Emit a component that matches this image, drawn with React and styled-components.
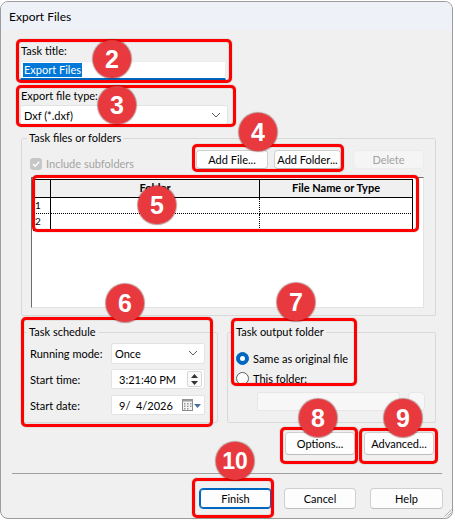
import React from 'react';
import styled, { createGlobalStyle } from 'styled-components';

const GlobalStyle = createGlobalStyle`
  html, body {
    margin: 0;
    padding: 0;
    background: #fff;
  }
  body {
    font-family: Lato, "Liberation Sans", sans-serif;
    font-size: 11px;
    color: #000;
  }
  * { box-sizing: border-box; }
`;

const Screen = styled.div`
  position: relative;
  width: 455px;
  height: 521px;
  padding-top: 1px;
  overflow: hidden;
`;

const Window = styled.div`
  width: 453px;
  height: 518px;
  border: 1px solid #9c9c9c;
  border-radius: 8px;
  background: #f0f0f0;
  display: flex;
  flex-direction: column;
  overflow: hidden;
`;

const TitleBar = styled.div`
  height: 28px;
  flex: none;
  background: #eef2f8;
  padding-left: 8px;
  display: flex;
  align-items: center;
  font-size: 12px;
`;

const Body = styled.div`
  flex: 1;
  display: flex;
  flex-direction: column;
  padding-left: 19px;
`;

const Label = styled.div`
  line-height: 15px;
  height: 15px;
  margin-top: ${p => p.$top || 0}px;
  padding-left: 1px;
  white-space: nowrap;
`;

const TextBox = styled.div`
  width: ${p => p.$w}px;
  height: 19px;
  margin-top: 3px;
  background: #fff;
  border: 1px solid #ececec;
  border-bottom: 2px solid #0067c0;
  padding-left: 2px;
  display: flex;
  align-items: center;
`;

const Selected = styled.span`
  background: #0078d7;
  color: #fff;
  line-height: 14px;
  padding: 0 1px;
`;

const Combo = styled.div`
  width: ${p => p.$w}px;
  height: ${p => p.$h || 20}px;
  margin-top: ${p => p.$top || 0}px;
  background: #fff;
  border: 1px solid #e3e3e3;
  border-radius: 2px;
  display: flex;
  align-items: center;
  justify-content: space-between;
  padding: 0 6px 0 ${p => p.$pl || 3}px;
  white-space: nowrap;
`;

const Group = styled.fieldset`
  margin: ${p => p.$top || 0}px 0 0 1px;
  padding: 0;
  width: ${p => p.$w}px;
  border: 1px solid #d9d9d9;
  border-radius: 2px;
  min-width: 0;
`;

const Legend = styled.legend`
  margin-left: ${p => p.$ml || 5}px;
  padding: 0 2px;
  line-height: 14px;
  font-size: 11px;
`;

const FilesInner = styled.div`
  padding: 5px 11px 7px 8px;
  display: flex;
  flex-direction: column;
`;

const ToolRow = styled.div`
  display: flex;
  align-items: flex-start;
  height: 19px;
`;

const CheckLabel = styled.label`
  display: flex;
  align-items: center;
  gap: 4px;
  margin-top: 7px;
  color: #a3a3a3;
  line-height: 14px;
  white-space: nowrap;
`;

const CheckBox = styled.span`
  width: 12px;
  height: 12px;
  border-radius: 3px;
  background: #c6c6c6;
  display: flex;
  align-items: center;
  justify-content: center;
`;

const ButtonGroup = styled.div`
  margin-left: auto;
  display: flex;
  gap: ${p => p.$gap || 6}px;
`;

const Button = styled.button`
  width: ${p => p.$w}px;
  height: ${p => p.$h || 19}px;
  margin-left: ${p => p.$ml || 0}px;
  padding: 0;
  white-space: nowrap;
  font-family: inherit;
  font-size: 11px;
  color: ${p => (p.disabled ? '#a3a3a3' : '#000')};
  background: ${p => (p.disabled ? '#f5f5f5' : '#fdfdfd')};
  border: 1px solid ${p => (p.$default ? '#0067c0' : p.disabled ? '#ececec' : '#d0d0d0')};
  border-bottom-color: ${p => (p.$default ? '#0067c0' : p.disabled ? '#ececec' : '#bdbdbd')};
  border-radius: 4px;
  box-shadow: ${p => (p.$default ? 'inset 0 0 0 1px #0067c0' : 'none')};
`;

const List = styled.div`
  margin: 8px 0 0 1px;
  width: 393px;
  height: 131px;
  background: #fff;
  border-style: solid;
  border-width: 1px;
  border-color: #6d6d6d #e3e3e3 #e3e3e3 #6d6d6d;
  padding: 1px;
`;

const Grid = styled.div`
  display: grid;
  grid-template-columns: 17px 209px 153px;
  grid-template-rows: 18px 16px 16px;
  width: 380px;
  border: 1px solid #000;
`;

const HeadCell = styled.div`
  background: #f0f0f0;
  border-right: 1px solid #000;
  border-bottom: 1px solid #000;
  font-weight: 700;
  text-align: center;
  line-height: 16px;
  &:last-child { border-right: 0; }
`;

const RowNum = styled.div`
  border-right: 1px solid #000;
  border-bottom: ${p => (p.$last ? 'none' : '1px dotted #000')};
  font-size: 10px;
  line-height: 15px;
  padding-left: 1px;
`;

const Cell = styled.div`
  border-right: ${p => (p.$end ? 'none' : '1px dotted #000')};
  border-bottom: ${p => (p.$last ? 'none' : '1px dotted #000')};
`;

const LowerRow = styled.div`
  display: flex;
  gap: 8px;
  margin-top: 9px;
`;

const ScheduleInner = styled.div`
  padding: 4px 12px 7px 8px;
  display: flex;
  flex-direction: column;
  gap: 6px;
`;

const FormRow = styled.div`
  display: flex;
  align-items: center;
  height: 20px;
`;

const RowLabel = styled.div`
  width: 81px;
  white-space: nowrap;
`;

const Picker = styled.div`
  width: 94px;
  height: 20px;
  background: #fff;
  border: 1px solid #e3e3e3;
  border-radius: 2px;
  display: flex;
  align-items: center;
  justify-content: space-between;
  padding: 0 2px 0 7px;
  white-space: nowrap;
`;

const Spin = styled.div`
  width: 15px;
  height: 16px;
  border: 1px solid #d6d6d6;
  border-radius: 2px;
  background: #fafafa;
  display: flex;
  flex-direction: column;
  align-items: center;
  justify-content: space-around;
`;

const OutputInner = styled.div`
  padding: 11px 10px 11px 8px;
  display: flex;
  flex-direction: column;
  gap: 4px;
`;

const RadioRow = styled.label`
  display: flex;
  align-items: center;
  gap: 4px;
  height: 16px;
  white-space: nowrap;
`;

const Radio = styled.span`
  width: 13px;
  height: 13px;
  border-radius: 50%;
  background: ${p => (p.$on ? '#0067c0' : '#fff')};
  border: 1px solid ${p => (p.$on ? '#0067c0' : '#5c5c5c')};
  display: flex;
  align-items: center;
  justify-content: center;
  &::after {
    content: '';
    width: 5px;
    height: 5px;
    border-radius: 50%;
    background: #fff;
    display: ${p => (p.$on ? 'block' : 'none')};
  }
`;

const FolderRow = styled.div`
  display: flex;
  gap: 8px;
  margin: 2px 0 0 21px;
`;

const DimBox = styled.div`
  width: ${p => p.$w}px;
  height: 19px;
  background: #f7f7f7;
  border: 1px solid #e6e6e6;
  border-radius: ${p => p.$r || 2}px;
`;

const ActionRow = styled.div`
  display: flex;
  justify-content: flex-end;
  gap: 9px;
  margin-top: 9px;
  padding-right: 18px;
`;

const Separator = styled.div`
  height: 1px;
  background: #a0a0a0;
  margin: 18px 10px 0 -8px;
`;

const Footer = styled.div`
  display: flex;
  margin-top: 14px;
  padding-left: 179px;
  flex: 1;
`;

const Grip = styled.svg`
  margin-left: auto;
  align-self: flex-end;
  margin-bottom: 1px;
`;

/* annotation marks drawn over the dialog */
const Frame = styled.div`
  position: absolute;
  left: ${p => p.$x}px;
  top: ${p => p.$y}px;
  width: ${p => p.$w}px;
  height: ${p => p.$h}px;
  border: 3px solid #ff0000;
  border-radius: 5px;
  box-shadow: 0 0 1px rgba(90, 0, 0, 0.7), inset 0 0 1px rgba(90, 0, 0, 0.6);
  pointer-events: none;
`;

const Badge = styled.div`
  position: absolute;
  left: ${p => p.$cx - 19}px;
  top: ${p => p.$cy - 19}px;
  width: 38px;
  height: 38px;
  border-radius: 50%;
  background: #e8393e;
  box-shadow: 0 0 1px 1px rgba(120, 10, 10, 0.45);
  color: #fff;
  font-family: "Liberation Sans", Arial, sans-serif;
  font-weight: 700;
  font-size: ${p => (p.$small ? 23 : 25)}px;
  display: flex;
  align-items: center;
  justify-content: center;
  padding-top: 1px;
`;

const Chevron = () => (
  <svg width="10" height="6" viewBox="0 0 10 6">
    <polyline points="1,1 5,5 9,1" fill="none" stroke="#5a5a5a" strokeWidth="1" />
  </svg>
);

const Tick = () => (
  <svg width="10" height="10" viewBox="0 0 10 10">
    <polyline points="2,5 4.2,7.2 8.2,2.8" fill="none" stroke="#fff" strokeWidth="1.4" />
  </svg>
);

const SpinArrows = () => (
  <Spin>
    <svg width="7" height="4" viewBox="0 0 7 4"><polygon points="0,4 3.5,0 7,4" fill="#333" /></svg>
    <svg width="7" height="4" viewBox="0 0 7 4"><polygon points="0,0 3.5,4 7,0" fill="#333" /></svg>
  </Spin>
);

const CalendarDrop = () => (
  <svg width="20" height="13" viewBox="0 0 20 13">
    <rect x="0.5" y="0.5" width="10" height="11" fill="#f4f4f4" stroke="#8a8a8a" />
    <rect x="0.5" y="0.5" width="10" height="2" fill="#9a9a9a" />
    <g fill="#9a9a9a">
      <rect x="2" y="4" width="1.5" height="1.5" /><rect x="5" y="4" width="1.5" height="1.5" /><rect x="8" y="4" width="1.5" height="1.5" />
      <rect x="2" y="6.5" width="1.5" height="1.5" /><rect x="5" y="6.5" width="1.5" height="1.5" /><rect x="8" y="6.5" width="1.5" height="1.5" />
      <rect x="2" y="9" width="1.5" height="1.5" /><rect x="5" y="9" width="1.5" height="1.5" />
    </g>
    <polygon points="12,5 19,5 15.5,9" fill="#4a6fa5" />
  </svg>
);

const marks = [
  { n: 2, box: [16, 39, 216, 44], c: [112, 59] },
  { n: 3, box: [16, 85, 220, 42], c: [117, 105] },
  { n: 4, box: [192, 144, 152, 28], c: [258, 132] },
  { n: 5, box: [32, 175, 387, 57], c: [157, 205] },
  { n: 6, box: [21, 317, 192, 110], c: [125, 303] },
  { n: 7, box: [231, 318, 126, 68], c: [296, 302] },
  { n: 8, box: [280, 427, 78, 37], c: [318, 418] },
  { n: 9, box: [359, 428, 79, 36], c: [403, 418] },
  { n: 10, box: [192, 478, 82, 40], c: [235, 461] },
];

export default function App() {
  return (
    <Screen>
      <GlobalStyle />
      <Window>
        <TitleBar>Export Files</TitleBar>
        <Body>
          <Label $top={13}>Task title:</Label>
          <TextBox $w={206}>
            <Selected>Export Files</Selected>
          </TextBox>

          <Label $top={8}>Export file type:</Label>
          <Combo $w={208} $top={2}>
            <span>Dxf (*.dxf)</span>
            <Chevron />
          </Combo>

          <Group $top={6} $w={415}>
            <Legend>Task files or folders</Legend>
            <FilesInner>
              <ToolRow>
                <CheckLabel>
                  <CheckBox><Tick /></CheckBox>
                  Include subfolders
                </CheckLabel>
                <ButtonGroup>
                  <Button $w={72}>Add File...</Button>
                  <Button $w={67}>Add Folder...</Button>
                  <Button $w={71} $ml={6} disabled>Delete</Button>
                </ButtonGroup>
              </ToolRow>
              <List>
                <Grid>
                  <HeadCell />
                  <HeadCell>Folder</HeadCell>
                  <HeadCell>File Name or Type</HeadCell>
                  <RowNum>1</RowNum>
                  <Cell />
                  <Cell $end />
                  <RowNum $last>2</RowNum>
                  <Cell $last />
                  <Cell $last $end />
                </Grid>
              </List>
            </FilesInner>
          </Group>

          <LowerRow>
            <Group $w={197}>
              <Legend>Task schedule</Legend>
              <ScheduleInner>
                <FormRow>
                  <RowLabel>Running mode:</RowLabel>
                  <Combo $w={94} $h={21}>
                    <span>Once</span>
                    <Chevron />
                  </Combo>
                </FormRow>
                <FormRow>
                  <RowLabel>Start time:</RowLabel>
                  <Picker>
                    <span>3:21:40 PM</span>
                    <SpinArrows />
                  </Picker>
                </FormRow>
                <FormRow>
                  <RowLabel>Start date:</RowLabel>
                  <Picker>
                    <span>9/&nbsp;&nbsp;4/2026</span>
                    <CalendarDrop />
                  </Picker>
                </FormRow>
              </ScheduleInner>
            </Group>

            <Group $w={209}>
              <Legend $ml={6}>Task output folder</Legend>
              <OutputInner>
                <RadioRow>
                  <Radio $on />
                  Same as original file
                </RadioRow>
                <RadioRow>
                  <Radio />
                  This folder:
                </RadioRow>
                <FolderRow>
                  <DimBox $w={144} />
                  <DimBox $w={17} $r={4} />
                </FolderRow>
              </OutputInner>
            </Group>
          </LowerRow>

          <ActionRow>
            <Button $w={70} $h={23}>Options...</Button>
            <Button $w={70} $h={23}>Advanced...</Button>
          </ActionRow>

          <Separator />

          <Footer>
            <Button $w={73} $h={21} $default>Finish</Button>
            <Button $w={72} $h={21} $ml={12}>Cancel</Button>
            <Button $w={73} $h={21} $ml={14}>Help</Button>
            <Grip width="8" height="8" viewBox="0 0 8 8">
              <g stroke="#b0b0b0" strokeWidth="1">
                <line x1="7.5" y1="0.5" x2="0.5" y2="7.5" />
                <line x1="7.5" y1="3.5" x2="3.5" y2="7.5" />
                <line x1="7.5" y1="6" x2="6" y2="7.5" />
              </g>
            </Grip>
          </Footer>
        </Body>
      </Window>

      {marks.map(m => (
        <Frame key={`f${m.n}`} $x={m.box[0]} $y={m.box[1]} $w={m.box[2]} $h={m.box[3]} />
      ))}
      {marks.map(m => (
        <Badge key={`b${m.n}`} $cx={m.c[0]} $cy={m.c[1]} $small={m.n > 9}>
          {m.n}
        </Badge>
      ))}
    </Screen>
  );
}
